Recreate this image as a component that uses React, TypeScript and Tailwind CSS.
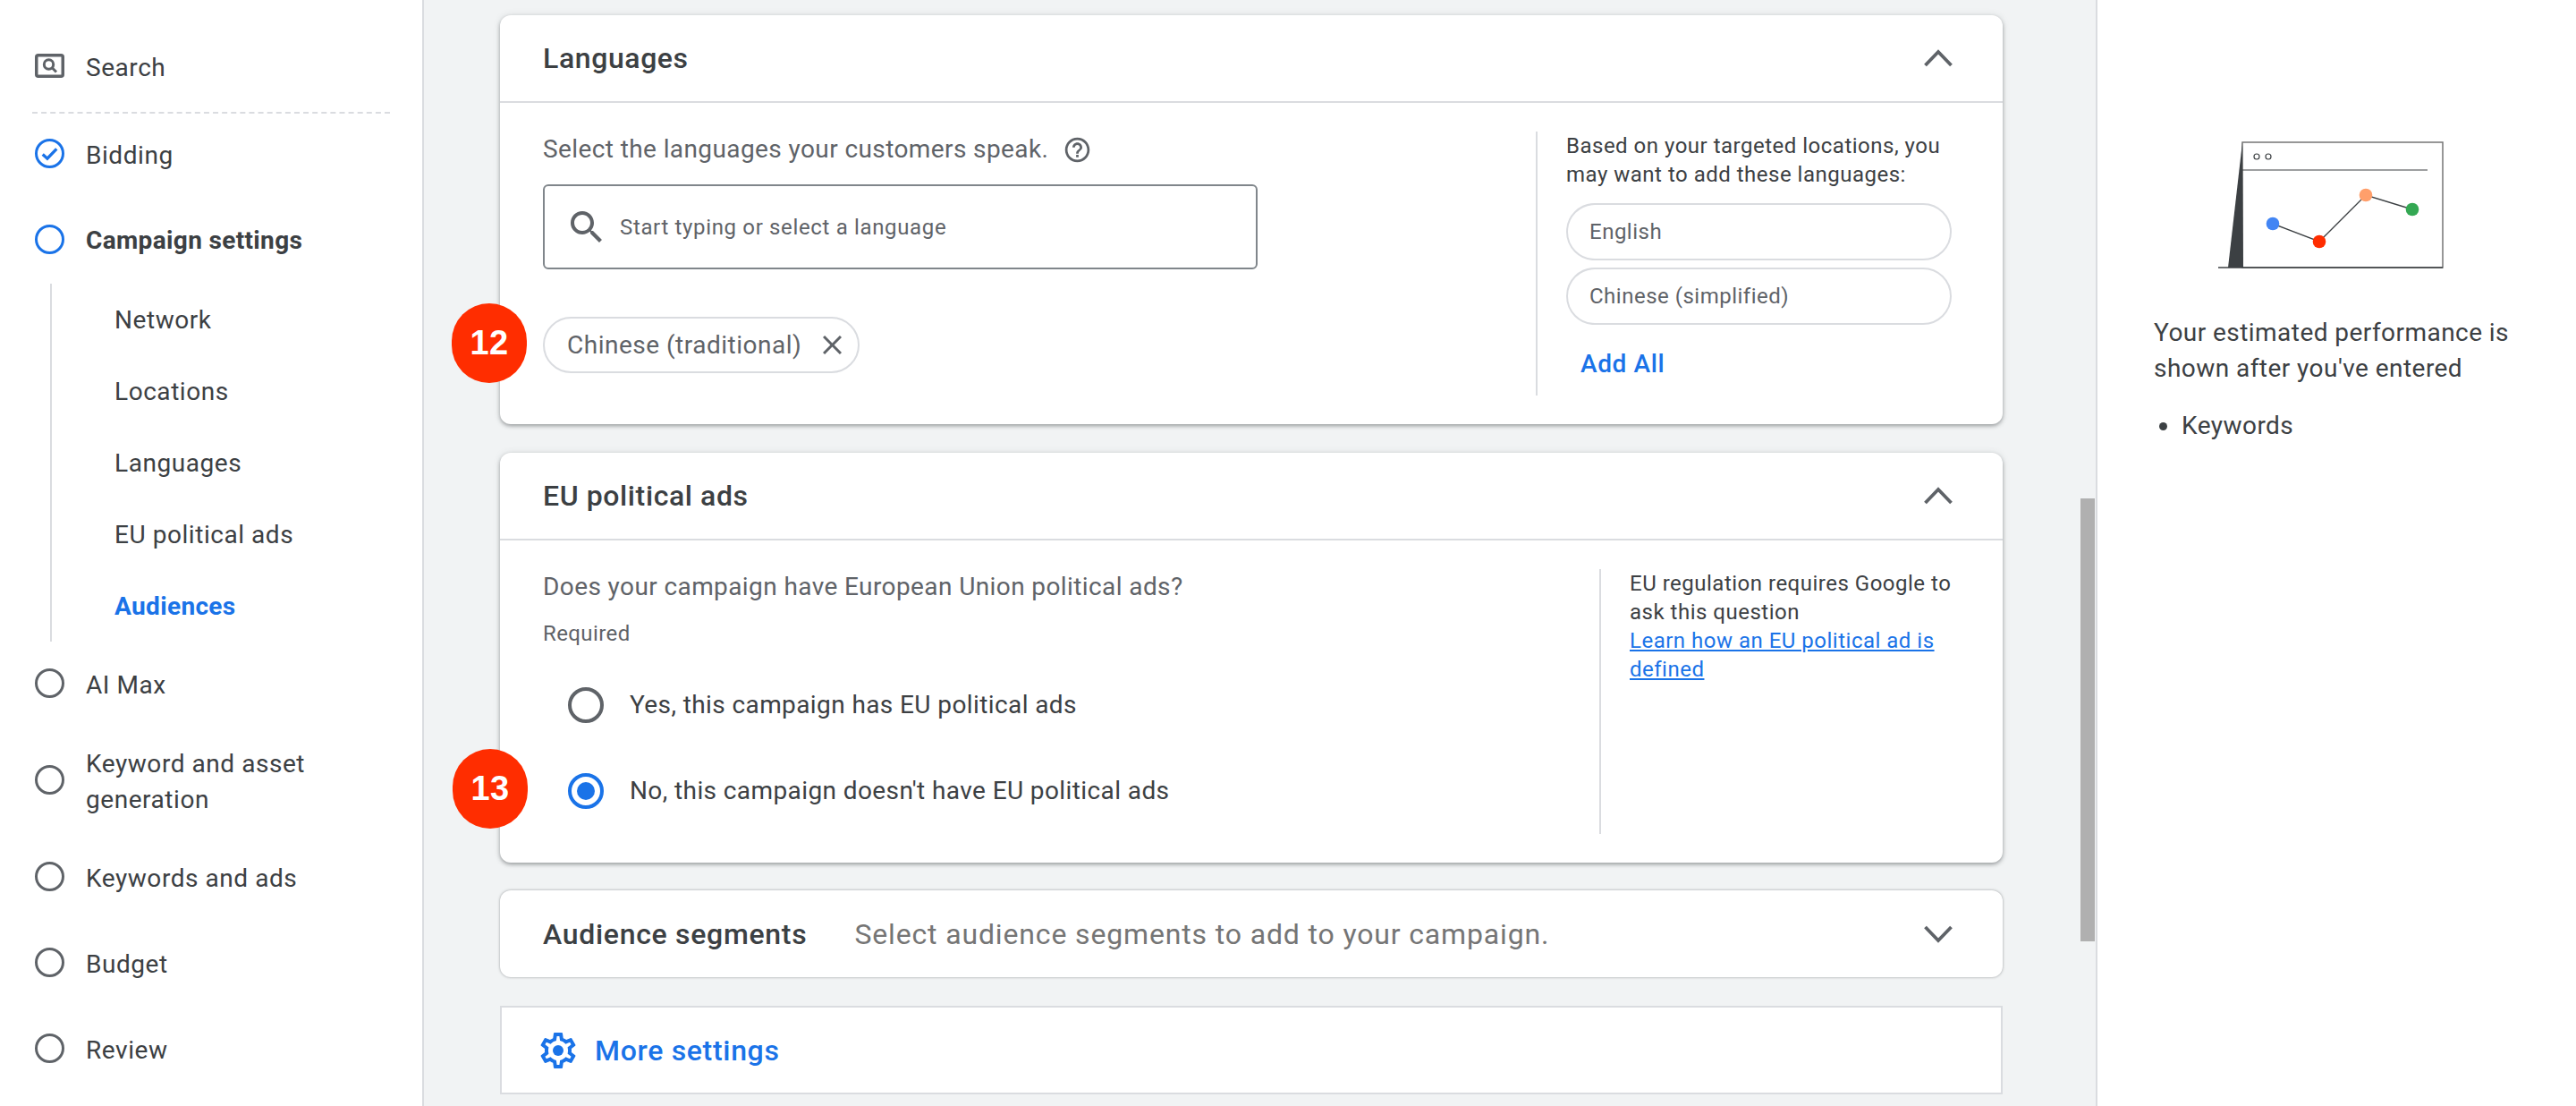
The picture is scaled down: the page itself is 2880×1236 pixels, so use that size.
const searchPath = "M15.5 14h-.79l-.28-.27C15.41 12.59 16 11.11 16 9.5 16 5.91 13.09 3 9.5 3S3 5.91 3 9.5 5.91 16 9.5 16c1.61 0 3.09-.59 4.23-1.57l.27.28v.79l5 4.99L20.49 19l-4.99-5zm-6 0C7.01 14 5 11.99 5 9.5S7.01 5 9.5 5 14 7.01 14 9.5 11.99 14 9.5 14z";
const helpPath = "M11 18h2v-2h-2v2zm1-16C6.48 2 2 6.48 2 12s4.48 10 10 10 10-4.48 10-10S17.52 2 12 2zm0 18c-4.41 0-8-3.59-8-8s3.59-8 8-8 8 3.59 8 8-3.59 8-8 8zm0-14c-2.21 0-4 1.79-4 4h2c0-1.1.9-2 2-2s2 .9 2 2c0 2-3 1.75-3 5h2c0-2.25 3-2.5 3-5 0-2.21-1.79-4-4-4z";
const gearPath = "M19.43 12.98c.04-.32.07-.64.07-.98 0-.34-.03-.66-.07-.98l2.11-1.65c.19-.15.24-.42.12-.64l-2-3.46c-.09-.16-.26-.25-.44-.25-.06 0-.12.01-.17.03l-2.49 1c-.52-.4-1.08-.73-1.69-.98l-.38-2.65C14.46 2.18 14.25 2 14 2h-4c-.25 0-.46.18-.49.42l-.38 2.65c-.61.25-1.17.59-1.69.98l-2.49-1c-.06-.02-.12-.03-.18-.03-.17 0-.34.09-.43.25l-2 3.46c-.13.22-.07.49.12.64l2.11 1.65c-.04.32-.07.65-.07.98 0 .33.03.66.07.98l-2.11 1.65c-.19.15-.24.42-.12.64l2 3.46c.09.16.26.25.44.25.06 0 .12-.01.17-.03l2.49-1c.52.4 1.08.73 1.69.98l.38 2.65c.03.24.24.42.49.42h4c.25 0 .46-.18.49-.42l.38-2.65c.61-.25 1.17-.59 1.69-.98l2.49 1c.06.02.12.03.18.03.17 0 .34-.09.43-.25l2-3.46c.12-.22.07-.49-.12-.64l-2.11-1.65zm-1.98-1.71c.04.31.05.52.05.73 0 .21-.02.43-.05.73l-.14 1.13.89.7 1.08.84-.7 1.21-1.27-.51-1.04-.42-.9.68c-.43.32-.84.56-1.25.73l-1.06.43-.16 1.13-.2 1.35h-1.4l-.19-1.35-.16-1.13-1.06-.43c-.43-.18-.83-.41-1.23-.71l-.91-.7-1.06.43-1.27.51-.7-1.21 1.08-.84.89-.7-.14-1.13c-.03-.31-.05-.54-.05-.74s.02-.43.05-.73l.14-1.13-.89-.7-1.08-.84.7-1.21 1.27.51 1.04.42.9-.68c.43-.32.84-.56 1.25-.73l1.06-.43.16-1.13.2-1.35h1.39l.19 1.35.16 1.13 1.06.43c.43.18.83.41 1.23.71l.91.7 1.06-.43 1.27-.51.7 1.21-1.07.85-.89.7.14 1.13z";

const Chevron = ({ up }: { up?: boolean }) => (
  <svg viewBox="0 0 32 20" className={up ? "w-[32px] h-[20px] fill-none stroke-[#5f6368]" : "w-[32px] h-[20px] fill-none stroke-[#5f6368] rotate-180"}>
    <path d="M1.5 18L16 3L30.5 18" strokeWidth="3.8" />
  </svg>
);

const Ring = ({ blue }: { blue?: boolean }) => (
  <div className={blue ? "w-[33px] h-[33px] shrink-0 rounded-full border-[3.5px] border-[#1a73e8]" : "w-[33px] h-[33px] shrink-0 rounded-full border-[3.5px] border-[#5f6368]"} />
);

const Badge = ({ n, className }: { n: string; className: string }) => (
  <div className={"absolute w-[84px] h-[89px] rounded-full bg-[#ff2d00] text-white flex items-center justify-center font-['Liberation_Sans',sans-serif] font-bold text-[38px] " + className}>
    {n}
  </div>
);

const SubItem = ({ label, active }: { label: string; active?: boolean }) => (
  <div className={active ? "h-[80px] pl-[70px] pt-[2px] flex items-center text-[#1a73e8] font-bold tracking-[0.35px]" : "h-[80px] pl-[70px] pt-[2px] flex items-center"}>{label}</div>
);

const Sidebar = () => (
  <aside className="w-[474px] shrink-0 h-full bg-white border-r-2 border-[#dadce0] pl-[39px] pt-[41px] text-[#3c4043] text-[28px] tracking-[0.55px]">
    <div className="h-[64px] flex items-center gap-[24px]">
      <svg viewBox="0 0 33 27" className="w-[33px] h-[27px] fill-none stroke-[#5f6368]">
        <rect x="1.75" y="1.75" width="29.5" height="23.5" rx="2" strokeWidth="3.5" />
        <circle cx="15.5" cy="12" r="5.2" strokeWidth="3" />
        <path d="M19.5 16l4.5 4.5" strokeWidth="3" />
      </svg>
      <span className="pt-[6px]">Search</span>
    </div>
    <div className="mt-[20px] -ml-[3px] w-[400px] border-t-2 border-dashed border-[#dadce0]" />
    <div className="mt-[12px] h-[64px] flex items-center gap-[24px]">
      <div className="relative w-[33px] h-[33px] shrink-0 rounded-full border-[3.5px] border-[#1a73e8]">
        <svg viewBox="0 0 26 26" className="absolute inset-0 fill-none stroke-[#1a73e8]">
          <path d="M5.5 14l5 4.5 10-10.5" strokeWidth="3.2" />
        </svg>
      </div>
      <span className="pt-[5px]">Bidding</span>
    </div>
    <div className="mt-[32px] h-[64px] flex items-center gap-[24px]">
      <Ring blue />
      <span className="pt-[4px] font-bold tracking-[0.35px]">Campaign settings</span>
    </div>
    <div className="mt-[18px] ml-[17px] border-l-2 border-[#dadce0]">
      <SubItem label="Network" />
      <SubItem label="Locations" />
      <SubItem label="Languages" />
      <SubItem label="EU political ads" />
      <SubItem label="Audiences" active />
    </div>
    <div className="mt-[14px] h-[64px] flex items-center gap-[24px]"><Ring /><span className="pt-[5px]">AI Max</span></div>
    <div className="mt-[36px] h-[80px] flex items-center gap-[24px]"><Ring /><span className="pt-[5px] leading-[40px] w-[300px]">Keyword and asset generation</span></div>
    <div className="mt-[36px] h-[64px] flex items-center gap-[24px]"><Ring /><span className="pt-[5px]">Keywords and ads</span></div>
    <div className="mt-[32px] h-[64px] flex items-center gap-[24px]"><Ring /><span className="pt-[5px]">Budget</span></div>
    <div className="mt-[32px] h-[64px] flex items-center gap-[24px]"><Ring /><span className="pt-[5px]">Review</span></div>
  </aside>
);

const CardHeader = ({ title }: { title: string }) => (
  <div className="h-[98px] border-b-2 border-[#dadce0] pl-[48px] pr-[56px] flex items-center justify-between">
    <h2 className="text-[32px] font-medium tracking-[0.6px] text-[#3c4043]">{title}</h2>
    <Chevron up />
  </div>
);

const Radio = ({ checked, label }: { checked?: boolean; label: string }) => (
  <div className="h-[64px] mt-[32px] ml-[28px] flex items-center gap-[29px] text-[28px] text-[#3c4043]">
    {checked ? (
      <div className="w-[40px] h-[40px] rounded-full border-4 border-[#1a73e8] flex items-center justify-center">
        <div className="w-[20px] h-[20px] rounded-full bg-[#1a73e8]" />
      </div>
    ) : (
      <div className="w-[40px] h-[40px] rounded-full border-4 border-[#5f6368]" />
    )}
    <span>{label}</span>
  </div>
);

const Illustration = () => (
  <svg viewBox="0 0 320 180" className="w-[320px] h-[180px] ml-[22px]">
    <rect x="77" y="19" width="224" height="140" fill="none" stroke="#757575" strokeWidth="1.5" />
    <path d="M77 19L78 159H61Z" fill="#3c4043" />
    <path d="M50 159H301" stroke="#3c4043" strokeWidth="1.5" />
    <path d="M77 50H284" stroke="#3c4043" strokeWidth="1.2" />
    <circle cx="93" cy="35" r="3" fill="none" stroke="#3c4043" strokeWidth="1.2" />
    <circle cx="106" cy="35" r="3" fill="none" stroke="#3c4043" strokeWidth="1.2" />
    <path d="M111 110L163 130L215 78L267 94" fill="none" stroke="#3c4043" strokeWidth="1.4" />
    <circle cx="111" cy="110" r="7.3" fill="#4285f4" />
    <circle cx="163" cy="130" r="7.3" fill="#ff2d00" />
    <circle cx="215" cy="78" r="7.3" fill="#ff9f6b" />
    <circle cx="267" cy="94" r="7.3" fill="#34a853" />
  </svg>
);

export default function App() {
  return (
    <div className="w-[2880px] h-[1236px] overflow-hidden flex bg-white font-[Roboto,sans-serif]">
      <Sidebar />
      <main className="relative w-[1869px] shrink-0 h-full bg-[#f1f3f4] pl-[85px] pt-[17px] tracking-[0.4px]">
        <section className="relative w-[1680px] h-[457px] bg-white rounded-[12px] shadow-[0_2px_4px_rgba(60,64,67,0.45),0_0_8px_rgba(60,64,67,0.1)]">
          <CardHeader title="Languages" />
          <div className="flex py-[32px] h-[359px]">
            <div className="w-[1158px] pl-[48px]">
              <div className="h-[40px] flex items-center gap-[16px] text-[28px] text-[#5f6368]">
                <span>Select the languages your customers speak.</span>
                <svg viewBox="0 0 24 24" className="w-[33px] h-[33px] fill-[#5f6368]"><path d={helpPath} /></svg>
              </div>
              <div className="mt-[19px] w-[799px] h-[95px] border-2 border-[#80868b] rounded-[6px] flex items-center pl-[23px] gap-[13px] text-[24px] tracking-[0.65px] text-[#5f6368]">
                <svg viewBox="0 0 24 24" className="w-[48px] h-[48px] fill-[#5f6368]"><path d={searchPath} /></svg>
                <span>Start typing or select a language</span>
              </div>
              <div className="mt-[53px] w-[354px] h-[63px] border-2 border-[#dadce0] rounded-full flex items-center pl-[25px] gap-[24px] text-[28px] tracking-[0.5px] text-[#5f6368]">
                <span>Chinese (traditional)</span>
                <svg viewBox="5 5 14 14" className="w-[21px] h-[21px] fill-[#5f6368]"><path d="M19 6.41L17.59 5 12 10.59 6.41 5 5 6.41 10.59 12 5 17.59 6.41 19 12 13.41 17.59 19 19 17.59 13.41 12z" /></svg>
              </div>
            </div>
            <div className="flex-1 border-l-2 border-[#dadce0] pl-[32px] text-[24px] tracking-[0.5px] text-[#3c4043]">
              <p className="leading-[32px] w-[431px]">Based on your targeted locations, you may want to add these languages:</p>
              <div className="mt-[16px] w-[431px] h-[64px] border-2 border-[#dadce0] rounded-full flex items-center pl-[24px] text-[#5f6368]">English</div>
              <div className="mt-[8px] w-[431px] h-[64px] border-2 border-[#dadce0] rounded-full flex items-center pl-[24px] text-[#5f6368]">Chinese (simplified)</div>
              <div className="mt-[24px] ml-[16px] h-[40px] flex items-center text-[28px] font-medium tracking-[0.6px] text-[#1a73e8]">Add All</div>
            </div>
          </div>
          <Badge n="12" className="left-[-54px] top-[322px]" />
        </section>

        <section className="relative mt-[32px] w-[1680px] h-[458px] bg-white rounded-[12px] shadow-[0_2px_4px_rgba(60,64,67,0.45),0_0_8px_rgba(60,64,67,0.1)]">
          <CardHeader title="EU political ads" />
          <div className="flex py-[32px] h-[360px]">
            <div className="w-[1229px] pl-[48px]">
              <div className="h-[40px] flex items-center text-[28px] text-[#5f6368]">Does your campaign have European Union political ads?</div>
              <div className="mt-[16px] h-[32px] flex items-center text-[24px] text-[#5f6368]">Required</div>
              <Radio label="Yes, this campaign has EU political ads" />
              <Radio checked label="No, this campaign doesn't have EU political ads" />
            </div>
            <div className="flex-1 border-l-2 border-[#dadce0] pl-[32px] text-[24px] tracking-[0.5px] leading-[32px] text-[#3c4043]">
              <p className="w-[380px]">EU regulation requires Google to ask this question</p>
              <a className="block w-[380px] text-[#1a73e8] underline">Learn how an EU political ad is defined</a>
            </div>
          </div>
          <Badge n="13" className="left-[-53px] top-[331px]" />
        </section>

        <section className="mt-[31px] w-[1680px] h-[97px] bg-white rounded-[12px] shadow-[0_0_3px_rgba(60,64,67,0.5)] pl-[48px] pr-[56px] flex items-center">
          <h2 className="text-[32px] font-medium tracking-[0.7px] text-[#3c4043]">Audience segments</h2>
          <span className="ml-[53px] text-[32px] tracking-[0.85px] text-[#757575]">Select audience segments to add to your campaign.</span>
          <div className="ml-auto"><Chevron /></div>
        </section>

        <section className="mt-[32px] w-[1680px] h-[99px] bg-white border-2 border-[#dadce0] pl-[39px] flex items-center gap-[17px] text-[#1a73e8]">
          <svg viewBox="0 0 24 24" className="w-[48px] h-[48px] fill-[#1a73e8]">
            <path d={gearPath} />
            <circle cx="12" cy="12" r="3" />
          </svg>
          <span className="text-[32px] font-medium tracking-[0.68px]">More settings</span>
        </section>

        <div className="absolute right-[1px] top-[557px] w-[16px] h-[495px] bg-[#b0b0b0]" />
      </main>

      <aside className="flex-1 h-full border-l-2 border-[#dadce0] pl-[63px] pt-[140px] text-[28px] text-[#3c4043] tracking-[0.45px]">
        <Illustration />
        <p className="mt-[32px] w-[420px] leading-[40px]">Your estimated performance is shown after you've entered</p>
        <div className="mt-[24px] h-[40px] flex items-center">
          <span className="ml-[6px] w-[9px] h-[9px] rounded-full bg-[#3c4043]" />
          <span className="ml-[16px]">Keywords</span>
        </div>
      </aside>
    </div>
  );
}
